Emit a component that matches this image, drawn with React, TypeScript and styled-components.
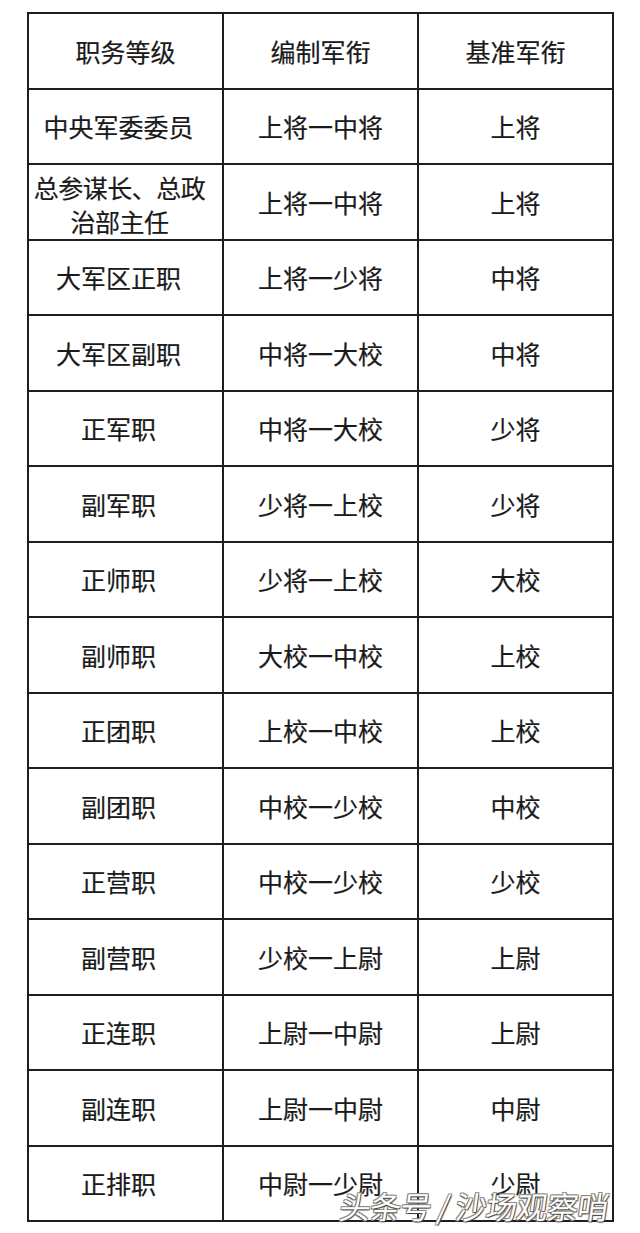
import styled, { createGlobalStyle } from 'styled-components';

const GlobalStyle = createGlobalStyle`
  html, body {
    margin: 0;
    padding: 0;
    background: #fff;
  }
  body {
    font-family: "Noto Sans CJK SC", "Noto Sans", sans-serif;
    color: #1c1c1c;
  }
`;

interface RankRow {
  post: string;
  range: string;
  base: string;
}

const rows: RankRow[] = [
  { post: '中央军委委员', range: '上将一中将', base: '上将' },
  { post: '总参谋长、总政\n治部主任', range: '上将一中将', base: '上将' },
  { post: '大军区正职', range: '上将一少将', base: '中将' },
  { post: '大军区副职', range: '中将一大校', base: '中将' },
  { post: '正军职', range: '中将一大校', base: '少将' },
  { post: '副军职', range: '少将一上校', base: '少将' },
  { post: '正师职', range: '少将一上校', base: '大校' },
  { post: '副师职', range: '大校一中校', base: '上校' },
  { post: '正团职', range: '上校一中校', base: '上校' },
  { post: '副团职', range: '中校一少校', base: '中校' },
  { post: '正营职', range: '中校一少校', base: '少校' },
  { post: '副营职', range: '少校一上尉', base: '上尉' },
  { post: '正连职', range: '上尉一中尉', base: '上尉' },
  { post: '副连职', range: '上尉一中尉', base: '中尉' },
  { post: '正排职', range: '中尉一少尉', base: '少尉' },
];

export default function App() {
  return (
    <>
      <GlobalStyle />
      <Page>
        <Table>
          <thead>
            <Row>
              <Cell as="th">职务等级</Cell>
              <Cell as="th">编制军衔</Cell>
              <Cell as="th">基准军衔</Cell>
            </Row>
          </thead>
          <tbody>
            {rows.map((r, i) => (
              <Row key={i}>
                <Cell $shift={r.post.includes('\n') ? 12 : 14} $tight={r.post.includes('\n')}>
                  {r.post}
                </Cell>
                <Cell>{r.range}</Cell>
                <Cell>{r.base}</Cell>
              </Row>
            ))}
          </tbody>
        </Table>
        <Watermark>头条号 / 沙场观察哨</Watermark>
      </Page>
    </>
  );
}

const Page = styled.div`
  position: relative;
  width: 640px;
  height: 1233px;
  padding: 12px 0 0 27px;
  box-sizing: border-box;
  overflow: hidden;
`;

const Table = styled.table`
  border-collapse: collapse;
  table-layout: fixed;
  width: 587px;
  border: 2px solid #1e1e1e;
`;

const Row = styled.tr`
  height: 75.5px;
`;

const Cell = styled.td<{ $tight?: boolean; $shift?: number }>`
  border: 2px solid #1e1e1e;
  padding: ${(p) => (p.$tight ? '4px' : '0')} ${(p) => p.$shift ?? 0}px 0 0;
  text-align: center;
  vertical-align: middle;
  font-size: 25px;
  font-weight: 400;
  white-space: pre-line;
  line-height: ${(p) => (p.$tight ? '34px' : '30px')};
  letter-spacing: ${(p) => (p.$tight ? '-0.5px' : '0')};
  color: #1a1a1a;
  -webkit-text-stroke: 0.2px #1a1a1a;
`;

const Watermark = styled.div`
  position: absolute;
  left: 340px;
  top: 1187px;
  font-size: 31px;
  line-height: 38px;
  color: #ffffff;
  letter-spacing: -0.5px;
  transform: skewX(-8deg);
  text-shadow:
    1px 1px 1px #3a3a3a,
    -1px -1px 0 #8a8a8a,
    1px -1px 0 #8a8a8a,
    -1px 1px 0 #8a8a8a;
  white-space: nowrap;
`;
